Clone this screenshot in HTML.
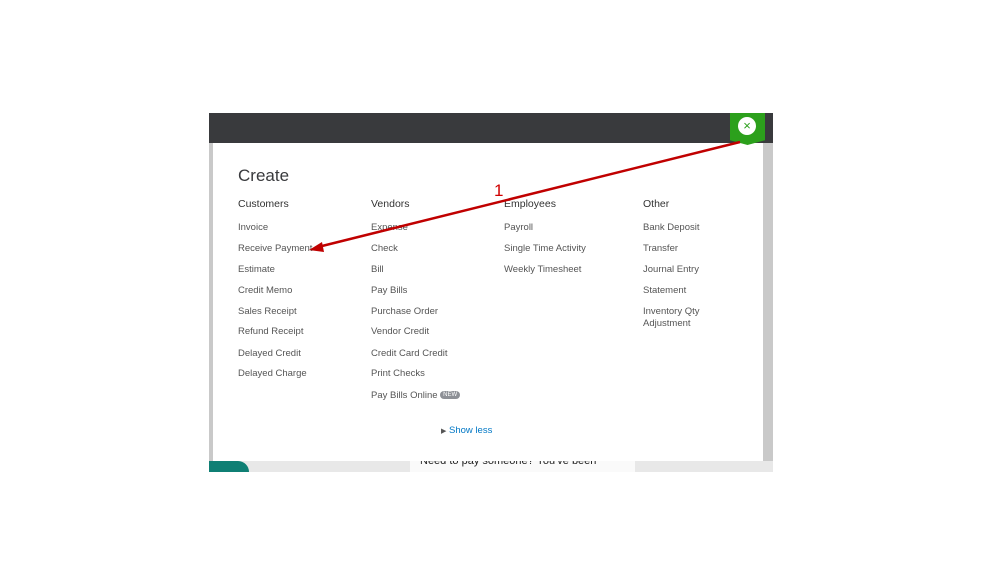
<!DOCTYPE html>
<html><head><style>
body{margin:0;width:999px;height:562px;background:#fff;position:relative;overflow:hidden;font-family:"Liberation Sans",sans-serif}
.a{position:absolute}
.t{position:absolute;font-size:9.5px;color:#555;white-space:nowrap}
.h{position:absolute;font-size:10.5px;color:#333;white-space:nowrap}
</style></head><body>
<div class="a" style="left:209px;top:113px;width:564px;height:31px;background:#393a3d"></div>
<div class="a" style="left:209px;top:143px;width:564px;height:329px;background:#c9c9c9"></div>
<div class="a" style="left:209px;top:461px;width:564px;height:11px;background:#e8e8e8"></div>
<div class="a" style="left:209px;top:461px;width:40px;height:11px;background:#0f7f74;border-radius:0 30px 0 0"></div>
<div class="a" style="left:410px;top:461px;width:225px;height:11px;background:#fafafa"></div>
<div class="a" style="left:420px;top:455px;font-size:11px;color:#222">Need to pay someone? You've been</div>
<div class="a" style="left:213px;top:143px;width:550px;height:318px;background:#fff"></div>
<div class="a" style="left:730px;top:113px;width:35px;height:32px;background:#2ca01c;clip-path:polygon(0 0,100% 0,100% 85%,50% 100%,0 85%)"></div>
<div class="a" style="left:738px;top:117px;width:18px;height:18px;border-radius:50%;background:#fff;color:#2ca01c;font-size:13px;line-height:18px;text-align:center">×</div>
<div class="a" style="left:238px;top:166px;font-size:17px;color:#393a3d">Create</div>
<div class="h" style="left:238px;top:198px">Customers</div>
<div class="h" style="left:371px;top:198px">Vendors</div>
<div class="h" style="left:504px;top:198px">Employees</div>
<div class="h" style="left:643px;top:198px">Other</div>
<div class="t" style="left:238px;top:222px">Invoice</div>
<div class="t" style="left:238px;top:243px">Receive Payment</div>
<div class="t" style="left:238px;top:264px">Estimate</div>
<div class="t" style="left:238px;top:285px">Credit Memo</div>
<div class="t" style="left:238px;top:306px">Sales Receipt</div>
<div class="t" style="left:238px;top:326px">Refund Receipt</div>
<div class="t" style="left:238px;top:348px">Delayed Credit</div>
<div class="t" style="left:238px;top:368px">Delayed Charge</div>
<div class="t" style="left:371px;top:222px">Expense</div>
<div class="t" style="left:371px;top:243px">Check</div>
<div class="t" style="left:371px;top:264px">Bill</div>
<div class="t" style="left:371px;top:285px">Pay Bills</div>
<div class="t" style="left:371px;top:306px">Purchase Order</div>
<div class="t" style="left:371px;top:326px">Vendor Credit</div>
<div class="t" style="left:371px;top:348px">Credit Card Credit</div>
<div class="t" style="left:371px;top:368px">Print Checks</div>
<div class="t" style="left:371px;top:390px">Pay Bills Online <span style="display:inline-block;background:#8d9096;color:#fff;font-size:6px;border-radius:5px;padding:1px 3px;vertical-align:middle">NEW</span></div>
<div class="t" style="left:504px;top:222px">Payroll</div>
<div class="t" style="left:504px;top:243px">Single Time Activity</div>
<div class="t" style="left:504px;top:264px">Weekly Timesheet</div>
<div class="t" style="left:643px;top:222px">Bank Deposit</div>
<div class="t" style="left:643px;top:243px">Transfer</div>
<div class="t" style="left:643px;top:264px">Journal Entry</div>
<div class="t" style="left:643px;top:285px">Statement</div>
<div class="t" style="left:643px;top:306px;line-height:12px">Inventory Qty<br>Adjustment</div>
<div class="t" style="left:441px;top:425px;color:#0077c5"><span style="font-size:7px;color:#555">▶</span> Show less</div>
<div class="a" style="left:494px;top:181px;font-size:17px;color:#d00000">1</div>
<svg class="a" style="left:0;top:0" width="999" height="562">
<line x1="740" y1="142" x2="318" y2="247" stroke="#c00000" stroke-width="2.5"/>
<polygon points="309,250 322,242 324,252" fill="#c00000"/>
</svg>
</body></html>
